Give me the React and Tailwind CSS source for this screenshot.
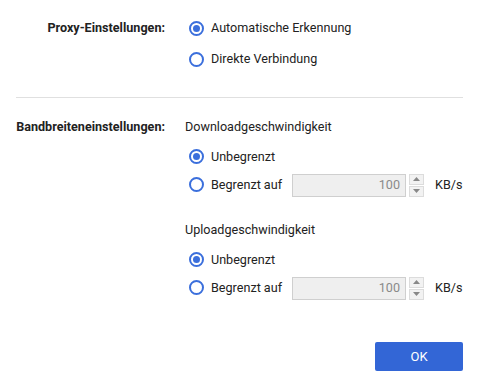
import React from "react";

function Radio({ checked, label }) {
  return (
    <div className="flex items-center">
      <span className="ml-[4px] flex h-[15px] w-[15px] items-center justify-center rounded-full border-2 border-[#3b6fdc] bg-white">
        {checked && <span className="h-[7px] w-[7px] rounded-full bg-[#3b6fdc]" />}
      </span>
      <span className="ml-[7px]">{label}</span>
    </div>
  );
}

function Spin() {
  return (
    <div className="ml-[3px] flex h-[23px] w-[15px] flex-col gap-[1px]">
      <div className="flex flex-1 items-center justify-center border border-[#dcdcdc] bg-[#f2f2f2]">
        <svg width="7" height="4" viewBox="0 0 7 4"><path d="M0 4 L3.5 0 L7 4 Z" fill="#888" /></svg>
      </div>
      <div className="flex flex-1 items-center justify-center border border-[#dcdcdc] bg-[#f2f2f2]">
        <svg width="7" height="4" viewBox="0 0 7 4"><path d="M0 0 L3.5 4 L7 0 Z" fill="#888" /></svg>
      </div>
    </div>
  );
}

function Limited() {
  return (
    <div className="flex h-[28px] items-center">
      <div className="w-[107px]">
        <Radio label="Begrenzt auf" />
      </div>
      <div className="flex h-[23px] w-[114px] items-center justify-end border border-[#cfcfcf] bg-[#efefef] pr-[5px] text-[#8a8a8a]">
        100
      </div>
      <Spin />
      <span className="ml-[11px]">KB/s</span>
    </div>
  );
}

export default function App() {
  return (
    <div
      className="h-[388px] w-[479px] bg-white px-[16px] pt-[13px] text-[12.6px] text-[#222]"
      style={{ fontFamily: "Roboto, 'Liberation Sans', sans-serif" }}
    >
      <div className="flex">
        <div className="flex h-[31px] w-[149px] items-center justify-end font-bold">Proxy-Einstellungen:</div>
        <div className="ml-[20px] flex flex-col">
          <div className="flex h-[31px] items-center"><Radio checked label="Automatische Erkennung" /></div>
          <div className="flex h-[31px] items-center"><Radio label="Direkte Verbindung" /></div>
        </div>
      </div>
      <div className="mt-[22px] h-px bg-[#e0e0e0]" />
      <div className="mt-[18px] flex">
        <div className="flex h-[22px] w-[149px] items-center justify-end font-bold">Bandbreiteneinstellungen:</div>
        <div className="ml-[20px] flex flex-col">
          <div className="flex h-[22px] items-center">Downloadgeschwindigkeit</div>
          <div className="mt-[5px] flex h-[28px] items-center"><Radio checked label="Unbegrenzt" /></div>
          <Limited />
          <div className="mt-[20px] flex h-[22px] items-center">Uploadgeschwindigkeit</div>
          <div className="mt-[5px] flex h-[28px] items-center"><Radio checked label="Unbegrenzt" /></div>
          <Limited />
        </div>
      </div>
      <div className="mt-[40px] flex justify-end">
        <button className="h-[29px] w-[88px] rounded-[2px] bg-[#3366d6] text-[13px] text-white">OK</button>
      </div>
    </div>
  );
}
